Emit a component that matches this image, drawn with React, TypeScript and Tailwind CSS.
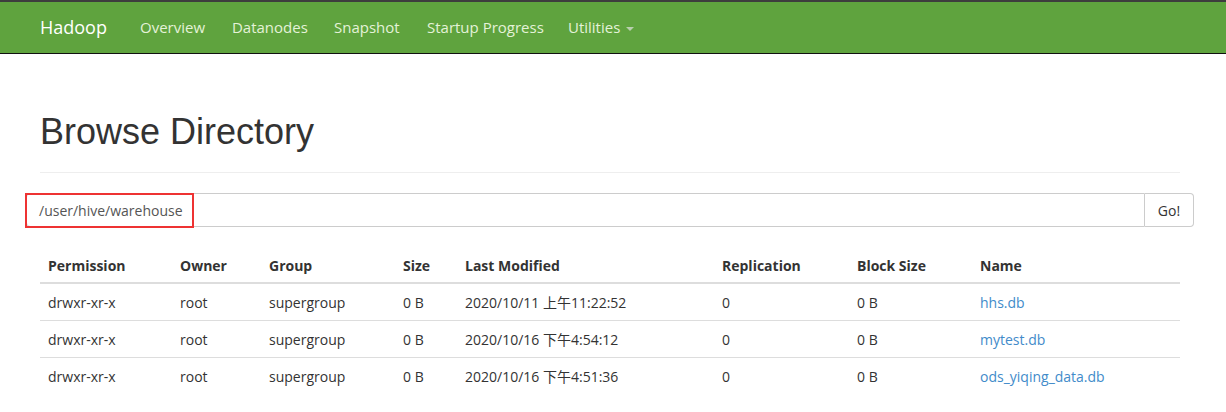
import React from "react";

const rows = [
  { date: "2020/10/11 上午11:22:52", name: "hhs.db" },
  { date: "2020/10/16 下午4:54:12", name: "mytest.db" },
  { date: "2020/10/16 下午4:51:36", name: "ods_yiqing_data.db" },
];

const cols = "grid grid-cols-[132px_89px_134px_62px_257px_135px_123px_208px]";
const body = { fontFamily: '"Open Sans", "Noto Sans CJK SC", sans-serif' };

export default function App() {
  return (
    <div className="w-[1226px] h-[412px] bg-white overflow-hidden text-[14px] text-[#333]" style={body}>
      {/* Navbar */}
      <div className="h-[54px] bg-[#5fa33e] border-t-2 border-[#3d3d3d] border-b border-b-[#111] flex items-center pl-[40px]">
        <span className="text-[18px] text-white mr-[33px]">Hadoop</span>
        <nav className="flex items-center text-[#e4f2d8] text-[15px]">
          <span className="w-[92px]">Overview</span>
          <span className="w-[102px]">Datanodes</span>
          <span className="w-[93px]">Snapshot</span>
          <span className="w-[141px]">Startup Progress</span>
          <span className="flex items-center gap-[6px]">
            Utilities
            <span className="w-0 h-0 border-l-4 border-r-4 border-t-4 border-l-transparent border-r-transparent border-t-[#b9cfae] mt-[2px]" />
          </span>
        </nav>
      </div>

      {/* Content */}
      <div className="px-[40px] w-[1220px]">
        <h1
          className="text-[36px] text-[#333] mt-[60px] leading-none pb-[22px] border-b border-[#eee] w-[1140px]"
          style={{ fontFamily: '"Liberation Sans", Arial, sans-serif' }}
        >
          Browse Directory
        </h1>

        <div className="-ml-[14px] mt-[20px] flex h-[34px] w-[1168px]">
          <div className="relative flex-1 border border-[#ccc] rounded-l-[4px] flex items-center pl-[12px] text-[#555]">
            /user/hive/warehouse
            <span className="absolute -left-[2px] -top-[1px] w-[169px] h-[35px] border-2 border-[#ee3333]" />
          </div>
          <div className="w-[49px] border border-l-0 border-[#ccc] rounded-r-[4px] flex items-center justify-center">
            Go!
          </div>
        </div>

        <div className="mt-[22px] w-[1140px]">
          <div className={`${cols} font-bold border-b-2 border-[#ddd] h-[35px] items-center`}>
            {["Permission", "Owner", "Group", "Size", "Last Modified", "Replication", "Block Size", "Name"].map((h) => (
              <div key={h} className="px-[8px]">{h}</div>
            ))}
          </div>
          {rows.map((r) => (
            <div key={r.name} className={`${cols} h-[37px] items-center border-b border-[#ddd] last:border-b-0`}>
              <div className="px-[8px]">drwxr-xr-x</div>
              <div className="px-[8px]">root</div>
              <div className="px-[8px]">supergroup</div>
              <div className="px-[8px]">0 B</div>
              <div className="px-[8px]">{r.date}</div>
              <div className="px-[8px]">0</div>
              <div className="px-[8px]">0 B</div>
              <div className="px-[8px] text-[#428bca]">{r.name}</div>
            </div>
          ))}
        </div>
      </div>
    </div>
  );
}
